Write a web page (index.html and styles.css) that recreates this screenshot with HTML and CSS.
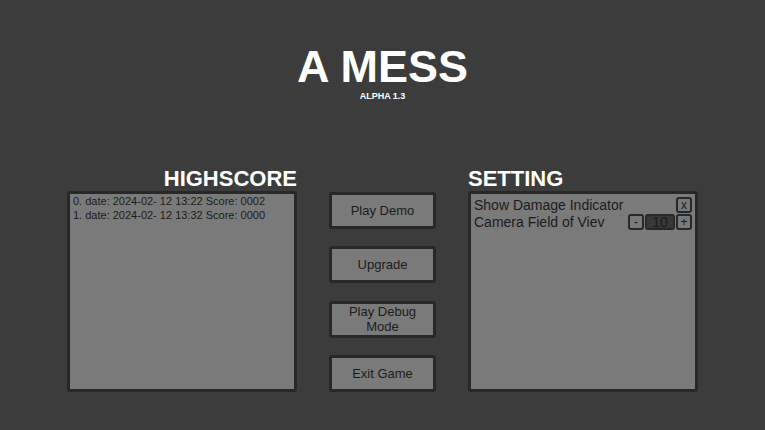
FILE: index.html
```
<!DOCTYPE html>
<html lang="en">
<head>
  <meta charset="UTF-8">
  <meta name="viewport" content="width=device-width, initial-scale=1">
  <title>A MESS</title>
  <link rel="stylesheet" href="styles.css">
</head>
<body>
<header class="title">
  <h1>A MESS</h1>
  <p>ALPHA 1.3</p>
</header>
<main class="menu">
  <section class="column highscore">
    <h2>HIGHSCORE</h2>
    <ol class="panel scores">
      <li>0. date: 2024-02- 12 13:22 Score: 0002</li>
      <li>1. date: 2024-02- 12 13:32 Score: 0000</li>
    </ol>
  </section>
  <nav class="buttons">
    <button type="button">Play Demo</button>
    <button type="button">Upgrade</button>
    <button type="button">Play Debug Mode</button>
    <button type="button">Exit Game</button>
  </nav>
  <section class="column">
    <h2>SETTING</h2>
    <div class="panel">
      <div class="setting">
        <span id="damage">Show Damage Indicator</span>
        <button type="button" class="small" aria-labelledby="damage" aria-pressed="true">x</button>
      </div>
      <div class="setting">
        <label for="fov">Camera Field of Viev</label>
        <div class="stepper">
          <button type="button" class="small">-</button>
          <input type="text" id="fov" class="value" value="10">
          <button type="button" class="small">+</button>
        </div>
      </div>
    </div>
  </section>
</main>
</body>
</html>
```

FILE: styles.css
```
* {
  box-sizing: border-box;
}
body {
  margin: 0;
  padding: 44px 16px 38px;
  background-color: #3c3c3c;
  color: #1c1c1c;
  font-family: "Liberation Sans", Arial, sans-serif;
  font-size: 14px;
}
h1, h2, p, ol {
  margin: 0;
}
.title {
  color: #fff;
  text-align: center;
  font-weight: bold;
}
.title h1 {
  font-size: 45px;
  line-height: 46px;
}
.title p {
  font-size: 9px;
  line-height: 12px;
}

/* Menu */
.menu {
  display: grid;
  grid-template-columns: minmax(0, 230px) 107px minmax(0, 230px);
  justify-content: center;
  column-gap: 32px;
  margin-top: 65px;
}
.column h2 {
  color: #fff;
  font-size: 22px;
  line-height: 24px;
}
.highscore h2 {
  text-align: right;
}
.panel {
  min-height: 201px;
  padding: 2px 3px;
  border: 3px solid #282828;
  border-radius: 3px;
  background-color: #7a7a7a;
}
.scores {
  padding-top: 0;
  list-style: none;
  font-size: 11px;
  line-height: 14px;
}

.buttons {
  display: flex;
  flex-direction: column;
  justify-content: space-between;
  padding-top: 25px;
}
button {
  border: 3px solid #282828;
  border-radius: 3px;
  background-color: #7a7a7a;
  color: inherit;
  font-family: inherit;
}
.buttons button {
  height: 37px;
  padding: 0 12px;
  font-size: 13px;
  line-height: 15px;
}

/* Settings */
.setting {
  display: flex;
  justify-content: space-between;
  align-items: center;
  height: 17px;
}
.stepper {
  display: flex;
  gap: 1px;
}
.small {
  width: 16px;
  height: 16px;
  padding: 0;
  border-width: 2px;
  font-size: 12px;
  line-height: 12px;
}
.value {
  width: 30px;
  height: 16px;
  padding: 0;
  border: 2px solid #282828;
  border-radius: 3px;
  background-color: #383838;
  color: #1c1c1c;
  font-family: inherit;
  font-size: 14px;
  line-height: 12px;
  text-align: center;
}
```
